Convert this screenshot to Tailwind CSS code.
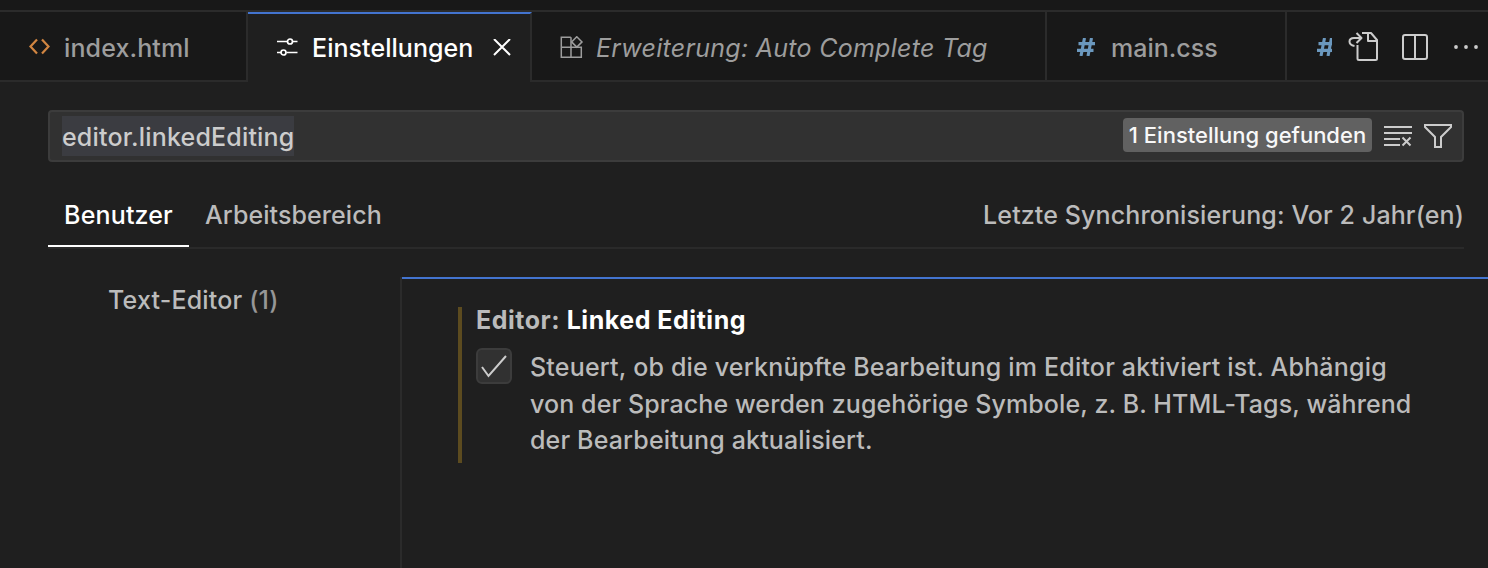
<!DOCTYPE html>
<html lang="de">
<head>
<meta charset="utf-8">
<title>Einstellungen</title>
<script src="https://cdn.jsdelivr.net/npm/@tailwindcss/browser@4"></script>
</head>
<body class="flex h-[568px] w-[1488px] flex-col overflow-hidden bg-[#1f1f1f] font-['Inter',sans-serif] text-[25px] leading-9 font-[450] whitespace-nowrap text-[#bbbbbb]">
  <header class="flex h-[82px] shrink-0 flex-col bg-[#181818] text-[#9d9d9d]">
    <div class="h-3 shrink-0 border-b-2 border-[#2b2b2b]"></div>
    <div class="flex h-[70px]">
      <div class="flex w-[248px] shrink-0 items-center border-r-2 border-b-2 border-[#2b2b2b] pt-1 pl-7">
        <svg class="h-6 w-6 shrink-0" viewBox="0 0 24 24" fill="none" stroke="#d18541" stroke-width="2.200"><path d="M9 3.500 2.500 10.500 9 17.500M14 3.500l6.500 7-6.500 7"/></svg>
        <span class="ml-3 tracking-[0.12px]">index.html</span>
      </div>
      <div class="flex w-[284px] shrink-0 items-center border-t-2 border-r-2 border-t-[#4374cf] border-r-[#2b2b2b] bg-[#1f1f1f] pl-7 text-white">
        <svg class="h-6 w-6 shrink-0" viewBox="0 0 24 24" fill="none" stroke="currentColor" stroke-width="1.700"><path d="M1 5.500h10.500M17 5.500h4.500M1 16.500h4M10.500 16.500h11"/><circle cx="14" cy="5.500" r="2.500"/><circle cx="7.500" cy="16.500" r="2.500"/></svg>
        <span class="ml-3 tracking-[0.05px]">Einstellungen</span>
        <svg class="ml-auto mr-[19px] h-[18px] w-[18px] shrink-0" viewBox="0 0 18 18" fill="none" stroke="currentColor" stroke-width="2"><path d="m1 0 16 16M17 0 1 16"/></svg>
      </div>
      <div class="flex w-[515px] shrink-0 items-center border-r-2 border-b-2 border-[#2b2b2b] pt-1 pl-7 italic">
        <svg class="h-6 w-6 shrink-0" viewBox="0 0 24 24" fill="none" stroke="currentColor" stroke-width="1.500"><path d="M10.800 1.300H1.300v20h20V11.300H1.300M11 1.300v20"/><path d="M16.800.700 22 5.900l-5.200 5.200-5.200-5.200z"/></svg>
        <span class="ml-3 tracking-[0.28px]">Erweiterung: Auto Complete Tag</span>
      </div>
      <div class="flex w-[240px] shrink-0 items-center border-r-2 border-b-2 border-[#2b2b2b] pt-1 pl-[29px]">
        <svg class="-mt-[3px] h-[18px] w-5 shrink-0" viewBox="0 0 20 18" fill="none" stroke="#6b98be" stroke-width="3.100"><path d="M8.500 0 5 18M15.500 0 12 18M2.500 5.600H19M1 12.400h16.500"/></svg>
        <span class="ml-[15px]">main.css</span>
      </div>
      <div class="flex grow items-center border-b-2 border-[#2b2b2b] pt-[2px] text-[#cccccc]">
        <div class="ml-[29px] w-[16px] shrink-0 overflow-hidden">
          <svg class="h-[18px] w-5" viewBox="0 0 20 18" fill="none" stroke="#6b98be" stroke-width="3.100"><path d="M8.500 0 5 18M15.500 0 12 18M2.500 5.600H19M1 12.400h16.500"/></svg>
        </div>
        <svg class="ml-[16px] h-8 w-8 shrink-0" viewBox="0 0 32 32" fill="none" stroke="currentColor" stroke-width="2" stroke-linejoin="round"><path d="M14 2h9l6 7v18.500q0 1.500-1.500 1.500H11q-1.500 0-1.500-1.500V14"/><path d="M20 2v8H29"/><path d="M6.500 15Q1.500 14 1.500 10.500 1.500 7 6 7h7M8.500 2l5 5-5 5"/></svg>
        <svg class="ml-[22px] h-[26px] w-[26px] shrink-0" viewBox="0 0 26 26" fill="none" stroke="currentColor" stroke-width="2"><rect x="1" y="0" width="24" height="24" rx="2" class="translate-y-px"/><path d="M13 1v24"/></svg>
        <svg class="ml-[26px] h-1 w-6 shrink-0" viewBox="0 0 24 4" fill="currentColor"><circle cx="2" cy="2" r="1.900"/><circle cx="12" cy="2" r="1.900"/><circle cx="22" cy="2" r="1.900"/></svg>
      </div>
    </div>
  </header>

  <div class="mt-7 ml-12 flex h-[52px] w-[1416px] shrink-0 items-center rounded border-2 border-[#3c3c3c] bg-[#313131] text-[#cccccc]">
    <div class="ml-3 flex h-10 w-[232px] items-center bg-[#3b3c41] pt-[2px]"><span class="tracking-[0.18px]">editor.linkedEditing</span></div>
    <div class="-mt-[2px] ml-auto flex h-[34px] w-[249px] items-center justify-center rounded bg-[#616161] text-[22px] text-[#f8f8f8]"><span>1 Einstellung gefunden</span></div>
    <svg class="ml-3 h-7 w-7 shrink-0" viewBox="0 0 28 28" fill="none" stroke="currentColor" stroke-width="2"><path d="M0 5h28M0 11h28M0 17h16M0 23h16M18.500 15.500l8 8M26.500 15.500l-8 8"/></svg>
    <svg class="ml-3 mr-[10px] h-7 w-7 shrink-0" viewBox="0 0 28 28" fill="none" stroke="currentColor" stroke-width="2"><path d="M1 3h26v2L17 15v10h-6V15L1 5z"/></svg>
  </div>

  <div class="mt-5 ml-12 flex h-[67px] w-[1416px] shrink-0 border-b-2 border-[#2a2a2a]">
    <div class="flex h-[65px] w-[141px] items-center justify-center border-b-2 border-white pt-[2px] text-white"><span class="tracking-[0.15px]">Benutzer</span></div>
    <div class="ml-4 flex h-[65px] items-center"><span class="tracking-[0.08px]">Arbeitsbereich</span></div>
    <div class="ml-auto flex h-[65px] items-center"><span class="tracking-[0.11px]">Letzte Synchronisierung: Vor 2 Jahr(en)</span></div>
  </div>

  <main class="mt-7 flex grow">
    <nav class="w-[402px] shrink-0 border-r-2 border-[#2b2b2b] pt-[5px] pl-[108px] tracking-[0.18px]"><span>Text-Editor</span> <span class="text-[#969696]">(1)</span></nav>
    <section class="grow border-t-2 border-[#4374cf] pt-7 pl-14">
      <div class="flex h-[156px] flex-col border-l-4 border-[#5c4b1f] pl-[14px]">
        <h2 class="-mt-[5px] font-[650] tracking-[0.53px]"><span>Editor:</span> <span class="text-white">Linked Editing</span></h2>
        <div class="mt-[10px] flex">
          <div class="flex h-9 w-9 items-center justify-center rounded-md border-2 border-[#3c3c3c] bg-[#313131]">
            <svg class="h-6 w-7 shrink-0" viewBox="0 0 28 24" fill="none" stroke="#cccccc" stroke-width="2"><path d="m2 13 6.500 9L26 2"/></svg>
          </div>
          <p class="mt-px ml-[18px] leading-[36.500px]"><span class="tracking-[0.19px]">Steuert, ob die verknüpfte Bearbeitung im Editor aktiviert ist. Abhängig</span><br><span class="tracking-[0.1px]">von der Sprache werden zugehörige Symbole, z. B. HTML-Tags, während</span><br><span class="tracking-[0.15px]">der Bearbeitung aktualisiert.</span></p>
        </div>
      </div>
    </section>
  </main>
</body>
</html>
